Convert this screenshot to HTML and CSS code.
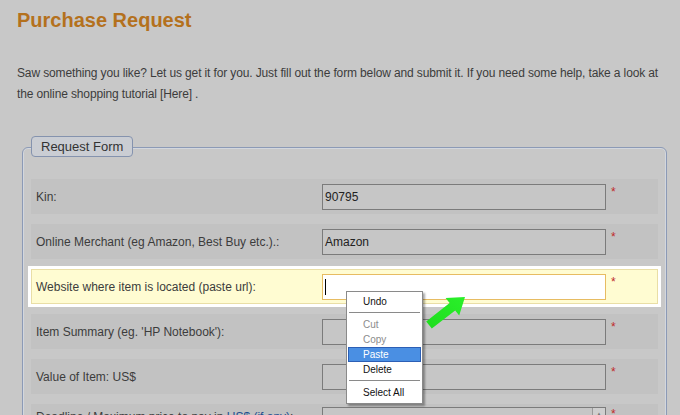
FILE: index.html
```html
<!DOCTYPE html>
<html>
<head>
<meta charset="utf-8">
<link rel="stylesheet" href="styles.css">
</head>
<body>
<div class="page">
  <h1 class="title">Purchase Request</h1>
  <p class="intro">Saw something you like? Let us get it for you. Just fill out the form below and submit it. If you need some help, take a look at<br>the online shopping tutorial [Here] .</p>

  <div class="fieldset">
    <div class="legend">Request Form</div>
    <div class="rows">
      <div class="row">
        <div class="label">Kin:</div>
        <div class="input">90795</div>
        <div class="req">*</div>
      </div>
      <div class="row">
        <div class="label">Online Merchant (eg Amazon, Best Buy etc.).:</div>
        <div class="input">Amazon</div>
        <div class="req">*</div>
      </div>
      <div class="row active">
        <div class="label">Website where item is located (paste url):</div>
        <div class="input focus"><span class="caret"></span></div>
        <div class="req">*</div>
      </div>
      <div class="row">
        <div class="label">Item Summary (eg. 'HP Notebook'):</div>
        <div class="input"></div>
        <div class="req">*</div>
      </div>
      <div class="row">
        <div class="label">Value of Item: US$</div>
        <div class="input"></div>
        <div class="req">*</div>
      </div>
      <div class="row tall">
        <div class="label">Deadline / Maximum price to pay in <span class="link">US$ (if any)</span>:</div>
        <div class="input area"><span class="scroll">&#9650;</span></div>
        <div class="req">*</div>
      </div>
    </div>
  </div>
</div>

<svg class="arrow" width="60" height="45" viewBox="0 0 60 45">
  <defs>
    <linearGradient id="g" x1="0" y1="1" x2="1" y2="0">
      <stop offset="0" stop-color="#1fdc1f"/>
      <stop offset="1" stop-color="#2af02a"/>
    </linearGradient>
  </defs>
  <polygon points="45,7 39.2,25.5 35.2,20.4 11.8,38.6 6.2,31.4 29.6,13 25.6,8.1" fill="url(#g)"/>
</svg>

<div class="menu">
  <div class="item">Undo</div>
  <div class="sep"></div>
  <div class="item disabled">Cut</div>
  <div class="item disabled">Copy</div>
  <div class="item selected">Paste</div>
  <div class="item">Delete</div>
  <div class="sep"></div>
  <div class="item">Select All</div>
</div>
</body>
</html>
```
FILE: styles.css
```css
html, body {
  margin: 0;
  padding: 0;
  background: #c8c8c8;
  height: 415px;
  overflow: hidden;
  font-family: "Liberation Sans", Arial, sans-serif;
}

.page {
  padding: 0 17px;
}

.title {
  margin: 0;
  padding-top: 8px;
  font-size: 20px;
  line-height: 24px;
  font-weight: bold;
  color: #b4711d;
}

.intro {
  margin: 31px 0 0 0;
  font-size: 12px;
  line-height: 21px;
  letter-spacing: -0.13px;
  color: #3c3c3c;
  white-space: nowrap;
}

.fieldset {
  margin: 42px 0 0 5px;
  width: 627px;
  border: 1px solid #8c9ab6;
  box-shadow: inset 0 0 0 1px #d3d7de;
  border-radius: 6px;
  padding: 1px 8px 0 8px;
  height: 300px;
}

.legend {
  display: block;
  width: fit-content;
  margin-top: -13px;
  height: 19px;
  line-height: 19px;
  padding: 0 9px;
  border: 1px solid #8593ae;
  border-radius: 4px;
  background: #cacdd3;
  font-size: 13px;
  color: #333;
}

.rows {
  margin-top: 22px;
  display: flex;
  flex-direction: column;
  gap: 10px;
}

.row {
  height: 35px;
  display: grid;
  grid-template-columns: 286px 284px auto;
  align-items: center;
  padding-left: 5px;
  background: #c2c2c2;
  box-sizing: border-box;
  font-size: 12px;
  color: #3c3c3c;
}

.row.active {
  background: #fffcd2;
  box-shadow: inset 0 0 0 1px #e9dea6, 0 0 0 3px #ffffff;
}

.row.tall {
  height: 60px;
  align-items: start;
}

.row.tall .label {
  padding-top: 6px;
}

.link {
  color: #1f4f8f;
}

.input {
  height: 26px;
  box-sizing: border-box;
  border: 1px solid #7b7b7b;
  background: #c6c6c6;
  padding-left: 2px;
  line-height: 24px;
  font-size: 12px;
  color: #222;
  position: relative;
}

.input.focus {
  background: #ffffff;
  border-color: #e7bc62;
}

.caret {
  display: inline-block;
  width: 1px;
  height: 16px;
  background: #000;
  vertical-align: middle;
}

.input.area {
  margin-top: 3px;
  height: 40px;
}

.scroll {
  position: absolute;
  right: 0;
  top: 0;
  width: 12px;
  height: 12px;
  border-left: 1px solid #9a9a9a;
  border-bottom: 1px solid #9a9a9a;
  background: #cfcfcf;
  font-size: 6px;
  line-height: 12px;
  text-align: center;
  color: #777;
}

.req {
  align-self: start;
  padding: 6px 0 0 5px;
  color: #c02a2a;
  font-size: 12px;
  line-height: 14px;
}

.row.tall .req {
  padding-top: 3px;
}

.arrow {
  position: absolute;
  left: 420px;
  top: 290px;
}

.menu {
  position: absolute;
  left: 346px;
  top: 291px;
  width: 75px;
  padding: 2px 0 3px 0;
  background: #ffffff;
  border: 1px solid #8a8a8a;
  box-shadow: 2px 2px 2px rgba(0, 0, 0, 0.35);
  font-size: 10px;
  color: #111;
}

.item {
  height: 15px;
  line-height: 15px;
  padding-left: 15px;
  margin: 0 1px;
  box-sizing: border-box;
}

.item.disabled {
  color: #8c8c8c;
}

.item.selected {
  background: #4a8fe3;
  border: 1px solid #2c5fb5;
  color: #ffffff;
  padding-left: 14px;
  line-height: 13px;
}

.sep {
  height: 1px;
  background: #8a8a8a;
  margin: 3px 2px 4px 2px;
}
```
